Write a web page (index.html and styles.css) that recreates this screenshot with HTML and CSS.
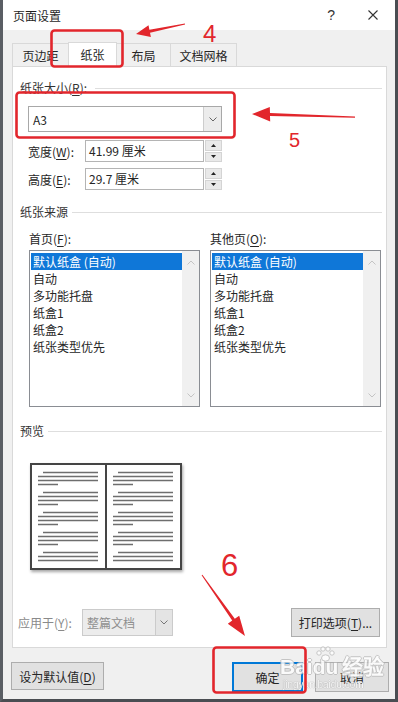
FILE: index.html
```html
<!DOCTYPE html>
<html lang="zh-CN">
<head>
    <meta charset="UTF-8">
    <meta name="viewport" content="width=device-width, initial-scale=1.0">
    <title>页面设置</title>
    <link rel="stylesheet" href="styles.css">
</head>
<body>
    <div class="dialog">
        <div class="titlebar">
            <span class="title">页面设置</span>
            <span class="help">?</span>
            <svg class="close" viewBox="0 0 10 10"><path d="M0.5 0.5L9.5 9.5M9.5 0.5L0.5 9.5" stroke="#333" stroke-width="1.1" fill="none"/></svg>
        </div>

        <div class="tabs">
            <div class="tab tab-margins">页边距</div>
            <div class="tab tab-paper active">纸张</div>
            <div class="tab tab-layout">布局</div>
            <div class="tab tab-grid">文档网格</div>
        </div>

        <div class="panel">
            <div class="group-label first"><span>纸张大小(<u>R</u>):</span></div>
            <div class="combo size-combo">
                <span class="combo-text">A3</span>
                <span class="combo-drop"><svg viewBox="0 0 8 5"><path d="M0.5 0.5L4 4L7.5 0.5" stroke="#666" fill="none"/></svg></span>
            </div>

            <div class="field-row first-field">
                <label>宽度(<u>W</u>):</label>
                <div class="spin">
                    <span class="spin-value">41.99 厘米</span>
                    <span class="spin-btns">
                        <span class="spin-btn"><svg viewBox="0 0 5 3"><path d="M0 3L2.5 0L5 3Z" fill="#222"/></svg></span>
                        <span class="spin-btn"><svg viewBox="0 0 5 3"><path d="M0 0L2.5 3L5 0Z" fill="#222"/></svg></span>
                    </span>
                </div>
            </div>
            <div class="field-row">
                <label>高度(<u>E</u>):</label>
                <div class="spin">
                    <span class="spin-value">29.7 厘米</span>
                    <span class="spin-btns">
                        <span class="spin-btn"><svg viewBox="0 0 5 3"><path d="M0 3L2.5 0L5 3Z" fill="#222"/></svg></span>
                        <span class="spin-btn"><svg viewBox="0 0 5 3"><path d="M0 0L2.5 3L5 0Z" fill="#222"/></svg></span>
                    </span>
                </div>
            </div>

            <div class="group-label source-title"><span>纸张来源</span></div>
            <div class="sources">
                <div class="source">
                    <div class="source-label">首页(<u>F</u>):</div>
                    <div class="listbox">
                        <ul class="items">
                            <li class="selected">默认纸盒 (自动)</li>
                            <li>自动</li>
                            <li>多功能托盘</li>
                            <li>纸盒1</li>
                            <li>纸盒2</li>
                            <li>纸张类型优先</li>
                        </ul>
                        <div class="vscroll">
                            <svg viewBox="0 0 8 5"><path d="M0.5 4.5L4 1L7.5 4.5" stroke="#c4c4c4" fill="none"/></svg>
                            <svg viewBox="0 0 8 5"><path d="M0.5 0.5L4 4L7.5 0.5" stroke="#c4c4c4" fill="none"/></svg>
                        </div>
                    </div>
                </div>
                <div class="source">
                    <div class="source-label">其他页(<u>O</u>):</div>
                    <div class="listbox">
                        <ul class="items">
                            <li class="selected">默认纸盒 (自动)</li>
                            <li>自动</li>
                            <li>多功能托盘</li>
                            <li>纸盒1</li>
                            <li>纸盒2</li>
                            <li>纸张类型优先</li>
                        </ul>
                        <div class="vscroll">
                            <svg viewBox="0 0 8 5"><path d="M0.5 4.5L4 1L7.5 4.5" stroke="#c4c4c4" fill="none"/></svg>
                            <svg viewBox="0 0 8 5"><path d="M0.5 0.5L4 4L7.5 0.5" stroke="#c4c4c4" fill="none"/></svg>
                        </div>
                    </div>
                </div>
            </div>

            <div class="group-label preview-title"><span>预览</span></div>
            <svg class="book" viewBox="0 0 152 107">
                <defs>
                    <path id="page-lines" d="M13 9.5H68M8 13.5H68M8 17.5H68M8 21.5H28
                        M13 29.5H68M8 33.5H68M8 37.5H68M8 41.5H28
                        M13 49.5H68M8 53.5H68M8 57.5H68M8 61.5H28
                        M13 69.5H68M8 73.5H68M8 77.5H68M8 81.5H28
                        M13 89.5H68M8 93.5H68M8 97.5H68" stroke="#6e6e6e" stroke-width="1.6" fill="none"/>
                </defs>
                <rect x="1" y="1" width="150" height="105" fill="#fff" stroke="#454545" stroke-width="2"/>
                <path d="M76 1V106" stroke="#454545" stroke-width="2"/>
                <use href="#page-lines"/>
                <use href="#page-lines" x="75"/>
            </svg>

            <div class="apply-row">
                <span class="apply-label">应用于(<u>Y</u>):</span>
                <div class="combo disabled">
                    <span class="combo-text">整篇文档</span>
                    <span class="combo-drop"><svg viewBox="0 0 8 5"><path d="M0.5 0.5L4 4L7.5 0.5" stroke="#777" fill="none"/></svg></span>
                </div>
                <button class="btn print-btn">打印选项(<u>T</u>)...</button>
            </div>
        </div>

        <div class="footer">
            <button class="btn default-btn">设为默认值(<u>D</u>)</button>
            <button class="btn ok-btn">确定</button>
            <button class="btn cancel-btn">取消</button>
        </div>
    </div>

    <!-- 百度经验水印 -->
    <div class="watermark">
        <span class="wm-logo">Bai<span class="wm-du">du<svg class="wm-paw" viewBox="0 0 20 16"><circle cx="4" cy="7" r="2.2"/><circle cx="8" cy="3" r="2.2"/><circle cx="13" cy="3" r="2.2"/><circle cx="17" cy="7" r="2.2"/><ellipse cx="10.5" cy="12" rx="4" ry="3.2"/></svg></span>经验</span>
        <span class="wm-url">jingyan.baidu.com</span>
    </div>

    <!-- 红色标注 -->
    <svg class="marks" viewBox="0 0 398 702">
        <g fill="none" stroke="#e2262c" stroke-width="2.6">
            <rect x="51.5" y="30.5" width="71" height="36" rx="3"/>
            <rect x="16.5" y="92.5" width="218" height="45" rx="3"/>
            <rect x="213.5" y="647.5" width="92" height="45" rx="3"/>
        </g>
        <g fill="#e2262c">
            <polygon points="136,34 150.9,37.1 150,32.7 185.1,24.6 184.9,23.4 149.4,29.7 148.5,25.3"/>
            <polygon points="252,114 270.2,121.5 270,116 355,117.7 355,116.5 270,113 269.8,107"/>
            <polygon points="245,636 227.8,623.7 232.2,620.6 201.6,575.3 202.4,574.7 234.8,618.8 239.2,615.7"/>
        </g>
        <g class="mark-num" fill="#e2262c">
            <text x="203" y="42" font-size="24">4</text>
            <text x="289" y="147" font-size="20">5</text>
            <text x="221" y="576" font-size="31">6</text>
        </g>
    </svg>
</body>
</html>
```

FILE: styles.css
```css
* {
    box-sizing: border-box;
}
body {
    margin: 0;
    width: 398px;
    height: 702px;
    overflow: hidden;
    position: relative;
    font-family: "Noto Sans CJK SC", "Noto Sans", sans-serif;
    font-size: 12px;
    color: #262626;
    background-color: #4c4f54;
}
u {
    text-decoration-thickness: 1px;
    text-underline-offset: 2px;
}
.dialog {
    height: 702px;
    background-color: #f0f0f0;
    border-left: 3px solid #5a5e64;
    border-right: 3px solid #4a4d52;
    border-bottom: 3px solid #4a4d52;
}
.titlebar {
    height: 30px;
    background-color: #fff;
    display: flex;
    align-items: center;
    padding-left: 10px;
}
.title {
    flex: 1;
    color: #1f1f1f;
}
.help {
    font-family: "Liberation Sans", sans-serif;
    font-size: 14px;
    margin-right: 33px;
    color: #333;
}
.close {
    width: 10px;
    height: 10px;
    margin-right: 17px;
}

/* tabs */
.tabs {
    display: flex;
    align-items: flex-end;
    margin-top: 12px;
    padding-left: 9px;
    height: 25px;
}
.tab {
    height: 24px;
    line-height: 23px;
    text-align: center;
    border: 1px solid #d9d9d9;
    border-bottom: none;
    margin-right: -1px;
    background-color: #f0f0f0;
}
.tab.active {
    height: 25px;
    background-color: #fff;
    position: relative;
    z-index: 2;
}
.tab-margins { width: 57px; }
.tab-paper { width: 49px; }
.tab-layout { width: 55px; }
.tab-grid { width: 67px; }

/* panel */
.panel {
    position: relative;
    z-index: 1;
    margin: -1px 8px 0 9px;
    height: 582px;
    background-color: #fff;
    border: 1px solid #d9d9d9;
    padding: 0 4px 0 7px;
}
.group-label {
    display: flex;
    align-items: center;
    gap: 4px;
    line-height: 16px;
    color: #333;
}
.group-label::after {
    content: "";
    flex: 1;
    height: 1px;
    background-color: #dedede;
}
.group-label.first {
    padding-top: 13px;
}
.group-label.first::after {
    margin-left: 4px;
}
.combo {
    display: flex;
    align-items: center;
    border: 1px solid #a8a8a8;
    background-color: #fff;
    height: 26px;
}
.combo-text {
    flex: 1;
    padding-left: 4px;
}
.combo-drop {
    width: 18px;
    align-self: stretch;
    border-left: 1px solid #cdcdcd;
    background-color: #ececec;
    display: flex;
    align-items: center;
    justify-content: center;
}
.combo-drop svg {
    width: 8px;
    height: 5px;
}
.size-combo {
    margin: 10px 0 0 8px;
    width: 194px;
}

.field-row {
    display: flex;
    align-items: center;
    margin: 6px 0 0 8px;
    height: 22px;
}
.field-row.first-field {
    margin-top: 8px;
}
.field-row label {
    width: 57px;
}
.spin {
    display: flex;
    width: 137px;
    height: 22px;
}
.spin-value {
    flex: 1;
    border: 1px solid #b4b4b4;
    padding-left: 3px;
    line-height: 20px;
}
.spin-btns {
    width: 17px;
    margin-left: 1px;
    display: flex;
    flex-direction: column;
    gap: 1px;
}
.spin-btn {
    flex: 1;
    background-color: #e9e9e9;
    border: 1px solid #d4d4d4;
    display: flex;
    align-items: center;
    justify-content: center;
}
.spin-btn svg {
    width: 5px;
    height: 3px;
}

.source-title {
    margin-top: 14px;
}
.sources {
    display: flex;
    gap: 10px;
    margin: 11px 0 0 9px;
}
.source {
    width: 171px;
}
.source-label {
    line-height: 16px;
}
.listbox {
    margin-top: 3px;
    height: 157px;
    border: 1px solid #8a8d93;
    display: flex;
}
.items {
    flex: 1;
    list-style: none;
    margin: 0;
    padding: 2px 0 0 1px;
}
.items li {
    height: 17px;
    line-height: 17px;
    padding-left: 2px;
    white-space: nowrap;
}
.items li.selected {
    background-color: #0f77d8;
    color: #fff;
}
.vscroll {
    width: 17px;
    background-color: #f0f0f0;
    display: flex;
    flex-direction: column;
    justify-content: space-between;
    align-items: center;
    padding: 9px 0 8px;
}
.vscroll svg {
    width: 8px;
    height: 5px;
}

.preview-title {
    margin-top: 16px;
}
.book {
    display: block;
    width: 152px;
    height: 107px;
    margin: 24px 0 0 10px;
    filter: drop-shadow(1px 2px 1.5px rgba(0, 0, 0, 0.35));
}

.apply-row {
    display: flex;
    align-items: center;
    margin-top: 38px;
    height: 29px;
}
.apply-label {
    width: 64px;
    margin-left: -2px;
    color: #8a8a8a;
}
.combo.disabled {
    width: 91px;
    height: 27px;
    background-color: #ececec;
    border-color: #cbcbcb;
    color: #8f8f8f;
}
.combo.disabled .combo-drop {
    width: 17px;
    background-color: #e4e4e4;
    border-left-color: #cbcbcb;
}

.btn {
    font-family: inherit;
    font-size: 12px;
    color: #262626;
    background-color: #e1e1e1;
    border: 1px solid #adadad;
    padding: 0;
    height: 29px;
}
.print-btn {
    margin-left: auto;
    margin-right: 2px;
    width: 89px;
}

.footer {
    display: flex;
    align-items: flex-start;
    padding: 14px 0 0 8px;
}
.default-btn {
    width: 93px;
    height: 28px;
}
.ok-btn {
    margin-left: 128px;
    width: 71px;
    height: 30px;
    border-color: #0078d7;
    box-shadow: inset 0 0 0 1px #0078d7;
}
.cancel-btn {
    margin-left: 12px;
    width: 74px;
    height: 30px;
}

/* watermark */
.watermark {
    position: absolute;
    z-index: 5;
    left: 280px;
    top: 655px;
    display: flex;
    flex-direction: column;
    pointer-events: none;
    opacity: 0.85;
}
.wm-logo {
    font-family: "Liberation Sans", sans-serif;
    font-size: 21px;
    line-height: 24px;
    font-weight: bold;
    color: #fff;
    text-shadow: 1px 0 0 #bdbdbd, -1px 0 0 #bdbdbd, 0 1px 0 #bdbdbd, 0 -1px 0 #bdbdbd;
    white-space: nowrap;
    display: flex;
}
.wm-du {
    position: relative;
    margin-right: 4px;
}
.wm-paw {
    position: absolute;
    left: 2px;
    top: -9px;
    width: 20px;
    height: 16px;
    fill: #fff;
    stroke: #bdbdbd;
    stroke-width: 1;
}
.wm-url {
    font-family: "Liberation Sans", sans-serif;
    font-size: 10px;
    line-height: 11px;
    color: #fff;
    text-shadow: 0 0 1px #9a9a9a, 0 0 1px #9a9a9a;
    padding-left: 3px;
}

/* annotations */
.marks {
    position: absolute;
    z-index: 10;
    left: 0;
    top: 0;
    width: 398px;
    height: 702px;
    pointer-events: none;
}
.mark-num text {
    font-family: "Liberation Sans", sans-serif;
}
```
